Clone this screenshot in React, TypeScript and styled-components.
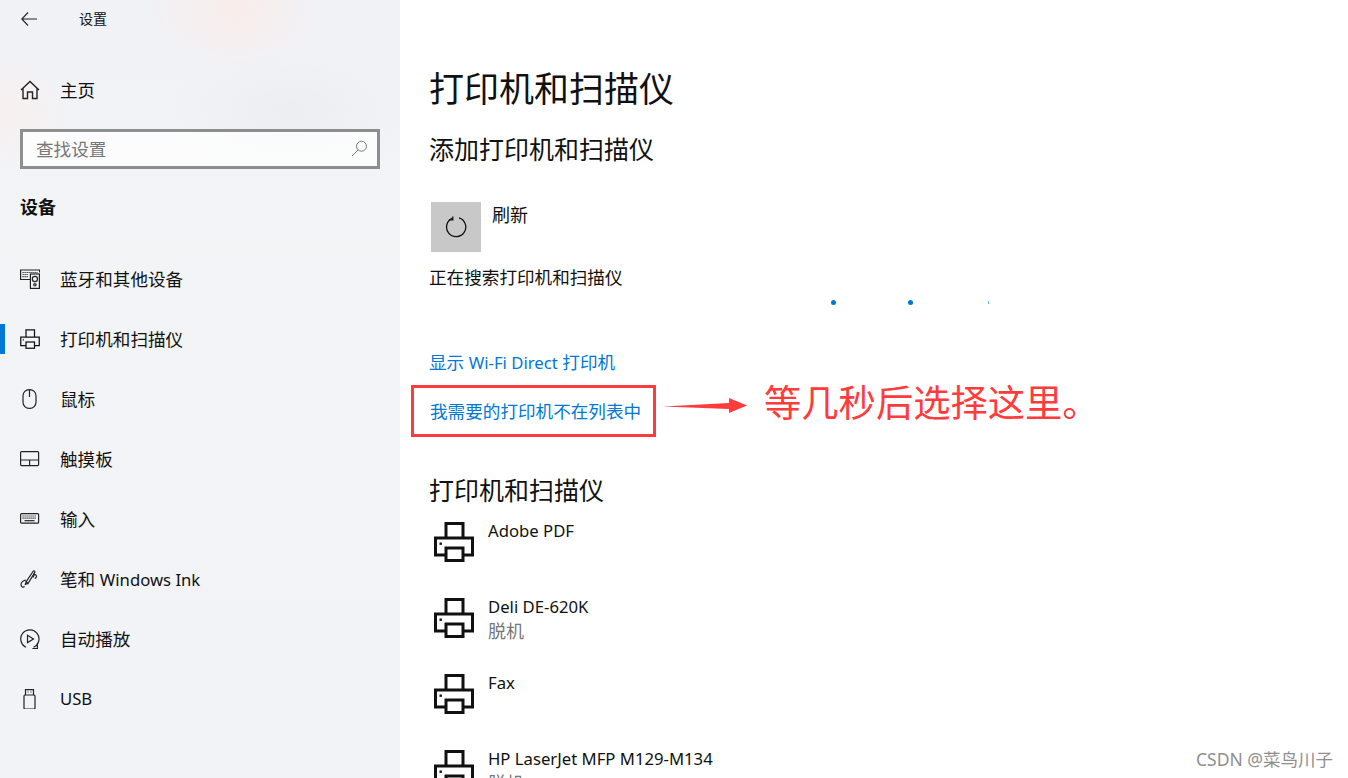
import React from 'react';
import styled, { createGlobalStyle } from 'styled-components';

const GlobalStyle = createGlobalStyle`
  html, body {
    margin: 0;
    padding: 0;
    height: 100%;
    overflow: hidden;
    background: #fff;
  }
  body {
    font-family: "Noto Sans", "Noto Sans CJK SC", sans-serif;
    color: #111;
  }
`;

const Page = styled.div`
  position: relative;
  display: flex;
  width: 1348px;
  height: 778px;
  overflow: hidden;
`;

const Sidebar = styled.aside`
  flex: 0 0 400px;
  display: flex;
  flex-direction: column;
  background:
    radial-gradient(ellipse 90px 60px at 235px 10px, rgba(255, 232, 226, 0.6), transparent),
    radial-gradient(ellipse 60px 60px at 10px 110px, rgba(252, 238, 236, 0.6), transparent),
    radial-gradient(ellipse 120px 60px at 290px 110px, rgba(232, 234, 236, 0.6), transparent),
    linear-gradient(180deg, #f0f2f6 0%, #f3f4f6 30%, #f2f3f6 100%);
`;

const TopBar = styled.div`
  display: flex;
  align-items: center;
  height: 38px;
  padding-left: 21px;
  font-size: 14px;
`;

const TopTitle = styled.span`
  margin: -2px 0 0 41px;
`;

const SideRow = styled.div<{ $active?: boolean }>`
  position: relative;
  display: flex;
  align-items: center;
  height: 60px;
  padding-left: 20px;
  font-size: 17.6px;
  &::before {
    content: '';
    display: ${(p) => (p.$active ? 'block' : 'none')};
    position: absolute;
    left: 0;
    top: 15px;
    width: 5px;
    height: 30px;
    background: #0078d7;
  }
`;

const SideIcon = styled.span`
  display: flex;
  width: 40px;
  flex: none;
  align-items: center;
`;

const SideLabel = styled.span`
  margin-top: -2px;
`;

const HomeRow = styled(SideRow)`
  margin-top: 22px;
`;

const SearchBox = styled.div`
  box-sizing: border-box;
  display: flex;
  align-items: center;
  justify-content: space-between;
  height: 40px;
  margin: 9px 20px 0;
  padding: 0 9px 2px 13px;
  border: 3px solid #8e8e8e;
  background: rgba(255, 255, 255, 0.72);
  color: #777;
  font-size: 17.6px;
`;

const GroupTitle = styled.div`
  margin: 24px 0 28px 20px;
  height: 28px;
  line-height: 28px;
  font-size: 18px;
  font-weight: 700;
`;

const Main = styled.main`
  flex: 1;
  padding: 65px 0 0 29px;
  background: #fff;
`;

const PageTitle = styled.h1`
  margin: 0;
  height: 48px;
  line-height: 48px;
  font-size: 35px;
  font-weight: 400;
`;

const SectionTitle = styled.h2`
  margin: 18px 0 0;
  height: 36px;
  line-height: 36px;
  font-size: 25px;
  font-weight: 400;
`;

const RefreshRow = styled.div`
  display: flex;
  margin: 35px 0 0 2px;
  font-size: 18px;
`;

const RefreshButton = styled.div`
  display: flex;
  width: 50px;
  height: 50px;
  align-items: center;
  justify-content: center;
  background: #c8c8c8;
`;

const RefreshLabel = styled.span`
  margin-left: 11px;
  line-height: 26px;
`;

const StatusText = styled.div`
  margin-top: 12px;
  height: 26px;
  line-height: 26px;
  font-size: 17.6px;
`;

const Dots = styled.div`
  display: flex;
  align-items: center;
  height: 5px;
  margin-top: 10px;
  padding-left: 402px;
`;

const Dot = styled.i`
  width: 5px;
  height: 5px;
  margin-right: 72px;
  border-radius: 50%;
  background: #0078d7;
`;

const DotSliver = styled.i`
  width: 1px;
  height: 3px;
  margin-left: 3px;
  background: #6aaee3;
`;

const LinkText = styled.span`
  color: #0078d7;
  font-size: 17.6px;
  line-height: 26px;
`;

const Latin = styled.span`
  font-size: 16.7px;
`;

const WifiLink = styled.div`
  margin-top: 44px;
  height: 26px;
`;

const AnnotationRow = styled.div`
  display: flex;
  align-items: center;
  height: 52px;
  margin: 10px 0 0 -18px;
`;

const RedBox = styled.div`
  box-sizing: border-box;
  display: flex;
  align-items: center;
  width: 245px;
  height: 52px;
  padding-left: 16px;
  border: 3px solid #ff3b3b;
`;

const Callout = styled.span`
  margin: -16px 0 0 17px;
  color: #ff3b3b;
  font-size: 37.3px;
  line-height: 48px;
  white-space: nowrap;
`;

const ArrowIcon = styled.svg`
  margin: 0 0 10px 7px;
  flex: none;
`;

const ListTitle = styled(SectionTitle)`
  margin-top: 35px;
`;

const PrinterList = styled.div`
  margin-top: 14px;
`;

const PrinterRow = styled.div`
  display: flex;
  height: 76px;
  padding-left: 5px;
`;

const PrinterText = styled.div`
  margin: -3px 0 0 14px;
  font-size: 16.7px;
  line-height: 24px;
`;

const PrinterStatus = styled.div`
  color: #777;
  font-size: 18px;
`;

const Watermark = styled.div`
  position: absolute;
  right: 15px;
  bottom: 6px;
  color: #8f8f8f;
  font-size: 17.5px;
  line-height: 26px;
`;

const PrinterGlyph = ({ size, weight }: { size: number; weight: number }) => (
  <svg width={size} height={size} viewBox="0 0 40 40" fill="none" stroke="#111" strokeWidth={weight}>
    <path d="M12 16V1.5H29V16" />
    <path d="M12 33H1.5V16H38.5V33H29" />
    <rect x="12" y="26" width="17" height="12.5" />
    <rect x="5.5" y="20.5" width="2.4" height="2.4" fill="#111" stroke="none" />
  </svg>
);

const line = { fill: 'none', stroke: '#222', strokeWidth: 1.2 };

const navItems: { label: React.ReactNode; key: string; icon: React.ReactNode; active?: boolean }[] = [
  {
    key: 'bluetooth',
    label: '蓝牙和其他设备',
    icon: (
      <svg width="20" height="20" viewBox="0 0 20 20" {...line}>
        <path d="M10 10.5H.6V1h19v2.5" />
        <rect x="10.4" y="5" width="9" height="14.4" />
        <circle cx="14.9" cy="10" r="2.6" />
        <circle cx="14.9" cy="15.8" r="1.2" />
        <path d="M2.5 3.5h15M2.5 5.5h6M2.5 7.7h6" strokeDasharray="1.2 .8" />
      </svg>
    ),
  },
  { key: 'printers', label: '打印机和扫描仪', icon: <PrinterGlyph size={20} weight={2.5} />, active: true },
  {
    key: 'mouse',
    label: '鼠标',
    icon: (
      <svg width="20" height="20" viewBox="0 0 20 20" {...line}>
        <rect x="3" y=".6" width="13" height="18.8" rx="6.2" />
        <path d="M9.5 1v7" />
      </svg>
    ),
  },
  {
    key: 'touchpad',
    label: '触摸板',
    icon: (
      <svg width="20" height="20" viewBox="0 0 20 20" {...line}>
        <rect x=".6" y="2.6" width="18" height="14" rx="1" />
        <path d="M.6 11h18M9.6 11v5.6" />
      </svg>
    ),
  },
  {
    key: 'input',
    label: '输入',
    icon: (
      <svg width="20" height="20" viewBox="0 0 20 20" {...line}>
        <rect x=".6" y="4.6" width="18" height="9.6" rx="1" />
        <path d="M2.5 7h14M2.5 9.2h14" strokeDasharray="1.2 .8" />
        <path d="M4.5 11.7h10" />
      </svg>
    ),
  },
  {
    key: 'pen',
    label: (
      <>
        笔和 <Latin>Windows Ink</Latin>
      </>
    ),
    icon: (
      <svg width="20" height="20" viewBox="0 0 20 20" {...line}>
        <path d="M8 14.5l-1.8-1.8L13 2.5c.8-1.2 2.3-.3 1.8.9L8 14.5z" />
        <path d="M6.2 12.7L5.4 15.4 8 14.5M13 8.5l1.2-3c1.2-.3 2.8 1 2.2 2.4-.3.8-1 1.2-1.6 1.6" />
        <path d="M6 11c-2.5.6-5 2.5-5 4.8 0 2.2 2.4 3 3.5 1.6" />
      </svg>
    ),
  },
  {
    key: 'autoplay',
    label: '自动播放',
    icon: (
      <svg width="20" height="20" viewBox="0 0 20 20" {...line}>
        <path d="M13.5 18.3A9.1 9.1 0 1 0 6 18.2" />
        <path d="M7.5 6.2v7.4l6-3.7-6-3.7z" />
        <path d="M12.4 19.6h5v-5" />
      </svg>
    ),
  },
  {
    key: 'usb',
    label: <Latin>USB</Latin>,
    icon: (
      <svg width="20" height="20" viewBox="0 0 20 20" {...line}>
        <rect x="4" y="6" width="11" height="14" rx="1" />
        <path d="M5.5 6V.6h8V6M7.5 3h1M10.5 3h1" />
      </svg>
    ),
  },
];

const printers = [
  { name: 'Adobe PDF' },
  { name: 'Deli DE-620K', status: '脱机' },
  { name: 'Fax' },
  { name: 'HP LaserJet MFP M129-M134', status: '脱机' },
];

const App = () => (
  <Page>
    <GlobalStyle />
    <Sidebar>
      <TopBar>
        <svg width="17" height="14" viewBox="0 0 17 14" fill="none" stroke="#222" strokeWidth="1.1">
          <path d="M7 .5L.8 7 7 13.5M.8 7H16" />
        </svg>
        <TopTitle>设置</TopTitle>
      </TopBar>
      <HomeRow>
        <SideIcon>
          <svg width="20" height="20" viewBox="0 0 20 20" fill="none" stroke="#222" strokeWidth="1.4">
            <path d="M1 10L10 1.5 19 10M3 8v10.5h4.5V12h5v6.5H17V8" />
          </svg>
        </SideIcon>
        <SideLabel>主页</SideLabel>
      </HomeRow>
      <SearchBox>
        查找设置
        <svg width="17" height="17" viewBox="0 0 17 17" fill="none" stroke="#777" strokeWidth="1">
          <circle cx="10.5" cy="6.2" r="5" />
          <path d="M7 10L1 16" />
        </svg>
      </SearchBox>
      <GroupTitle>设备</GroupTitle>
      {navItems.map((item) => (
        <SideRow key={item.key} $active={item.active}>
          <SideIcon>{item.icon}</SideIcon>
          <SideLabel>{item.label}</SideLabel>
        </SideRow>
      ))}
    </Sidebar>
    <Main>
      <PageTitle>打印机和扫描仪</PageTitle>
      <SectionTitle>添加打印机和扫描仪</SectionTitle>
      <RefreshRow>
        <RefreshButton>
          <svg width="22" height="22" viewBox="0 0 22 22" fill="none" stroke="#111" strokeWidth="1.3">
            <path d="M7.5 2.2A9.6 9.6 0 1 0 14 1.9" />
            <path d="M7.8 .4v3.4H4.2" />
          </svg>
        </RefreshButton>
        <RefreshLabel>刷新</RefreshLabel>
      </RefreshRow>
      <StatusText>正在搜索打印机和扫描仪</StatusText>
      <Dots>
        <Dot />
        <Dot />
        <DotSliver />
      </Dots>
      <WifiLink>
        <LinkText>
          显示 <Latin>Wi-Fi Direct</Latin> 打印机
        </LinkText>
      </WifiLink>
      <AnnotationRow>
        <RedBox>
          <LinkText>我需要的打印机不在列表中</LinkText>
        </RedBox>
        <ArrowIcon width="84" height="18" viewBox="0 0 84 18" fill="#ff3b3b">
          <path d="M0 9.5L66 6V1L84 8.5 66 16V12z" />
        </ArrowIcon>
        <Callout>等几秒后选择这里。</Callout>
      </AnnotationRow>
      <ListTitle>打印机和扫描仪</ListTitle>
      <PrinterList>
        {printers.map((p) => (
          <PrinterRow key={p.name}>
            <PrinterGlyph size={40} weight={3} />
            <PrinterText>
              {p.name}
              {p.status && <PrinterStatus>{p.status}</PrinterStatus>}
            </PrinterText>
          </PrinterRow>
        ))}
      </PrinterList>
    </Main>
    <Watermark>CSDN @菜鸟川子</Watermark>
  </Page>
);

export default App;
